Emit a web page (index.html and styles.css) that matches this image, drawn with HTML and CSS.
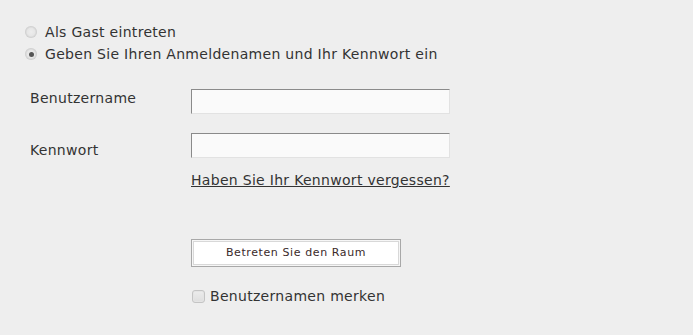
FILE: index.html
```html
<!DOCTYPE html>
<html lang="de">
<head>
<meta charset="utf-8">
<link rel="stylesheet" href="styles.css">
</head>
<body>
<div class="page">
  <div class="choices">
    <label class="choice"><span class="radio"></span>Als Gast eintreten</label>
    <label class="choice"><span class="radio checked"></span>Geben Sie Ihren Anmeldenamen und Ihr Kennwort ein</label>
  </div>
  <div class="form">
    <div class="label l1">Benutzername</div>
    <div class="field f1"><div class="input"></div></div>
    <div class="label l2">Kennwort</div>
    <div class="field f2"><div class="input"></div></div>
    <div class="field f3"><a class="forgot" href="#">Haben Sie Ihr Kennwort vergessen?</a></div>
    <div class="field f4"><div class="button">Betreten Sie den Raum</div></div>
    <div class="field f5"><label class="remember"><span class="check"></span>Benutzernamen merken</label></div>
  </div>
</div>
</body>
</html>
```
FILE: styles.css
```css
html, body {
  margin: 0;
  padding: 0;
  background: #eeeeee;
}
body {
  font-family: "DejaVu Sans", Verdana, sans-serif;
  font-size: 14px;
  letter-spacing: 0.3px;
  line-height: 16px;
  color: #333333;
}
.page {
  padding: 24px 0 0 25px;
}
.choices {
  display: flex;
  flex-direction: column;
  gap: 6px;
}
.choice {
  display: flex;
  align-items: center;
  height: 16px;
  gap: 8px;
}
.radio {
  width: 12px;
  height: 12px;
  border-radius: 50%;
  background: radial-gradient(circle at 50% 50%, #ededed 0%, #e6e6e6 45%, #c6c6c6 75%, #d6d6d6 100%);
  display: inline-block;
  position: relative;
  flex: none;
}
.radio.checked::after {
  content: "";
  position: absolute;
  left: 3.5px;
  top: 3.5px;
  width: 5px;
  height: 5px;
  border-radius: 50%;
  background: #555555;
}
.form {
  display: grid;
  grid-template-columns: 161px 259px;
  margin-top: 27px;
  margin-left: 5px;
}
.label {
  grid-column: 1;
}
.l1 { grid-row: 1; padding-top: 1px; }
.l2 { grid-row: 2; padding-top: 28px; }
.field { grid-column: 2; }
.f1 { grid-row: 1; }
.f2 { grid-row: 2; padding-top: 19px; }
.f3 { padding-top: 14px; }
.f4 { padding-top: 51px; }
.f5 { padding-top: 21px; }
.input {
  height: 25px;
  box-sizing: border-box;
  background: #fafafa;
  border-top: 1px solid #8a8a8a;
  border-left: 1px solid #8a8a8a;
  border-right: 1px solid #e2e2e2;
  border-bottom: 1px solid #e2e2e2;
}
.forgot {
  color: #333333;
  text-decoration: underline;
  display: block;
}
.button {
  width: 210px;
  height: 28px;
  box-sizing: border-box;
  border: 1px solid #a8a8a8;
  box-shadow: inset 0 0 0 1px #f6f6f6, inset 0 0 0 2px #d8d8d8;
  background: #ffffff;
  font-size: 11px;
  letter-spacing: 0.6px;
  color: #3a2a2a;
  display: flex;
  align-items: center;
  justify-content: center;
}
.remember {
  display: flex;
  align-items: center;
  gap: 5px;
  height: 16px;
  padding-left: 1px;
}
.check {
  width: 13px;
  height: 13px;
  margin-top: 1px;
  border-radius: 3px;
  box-sizing: border-box;
  border: 1px solid #c4c4c4;
  background: linear-gradient(#ececec, #dedede);
  box-shadow: inset 0 0 0 1px #e4e4e4;
  display: inline-block;
  flex: none;
}
```
